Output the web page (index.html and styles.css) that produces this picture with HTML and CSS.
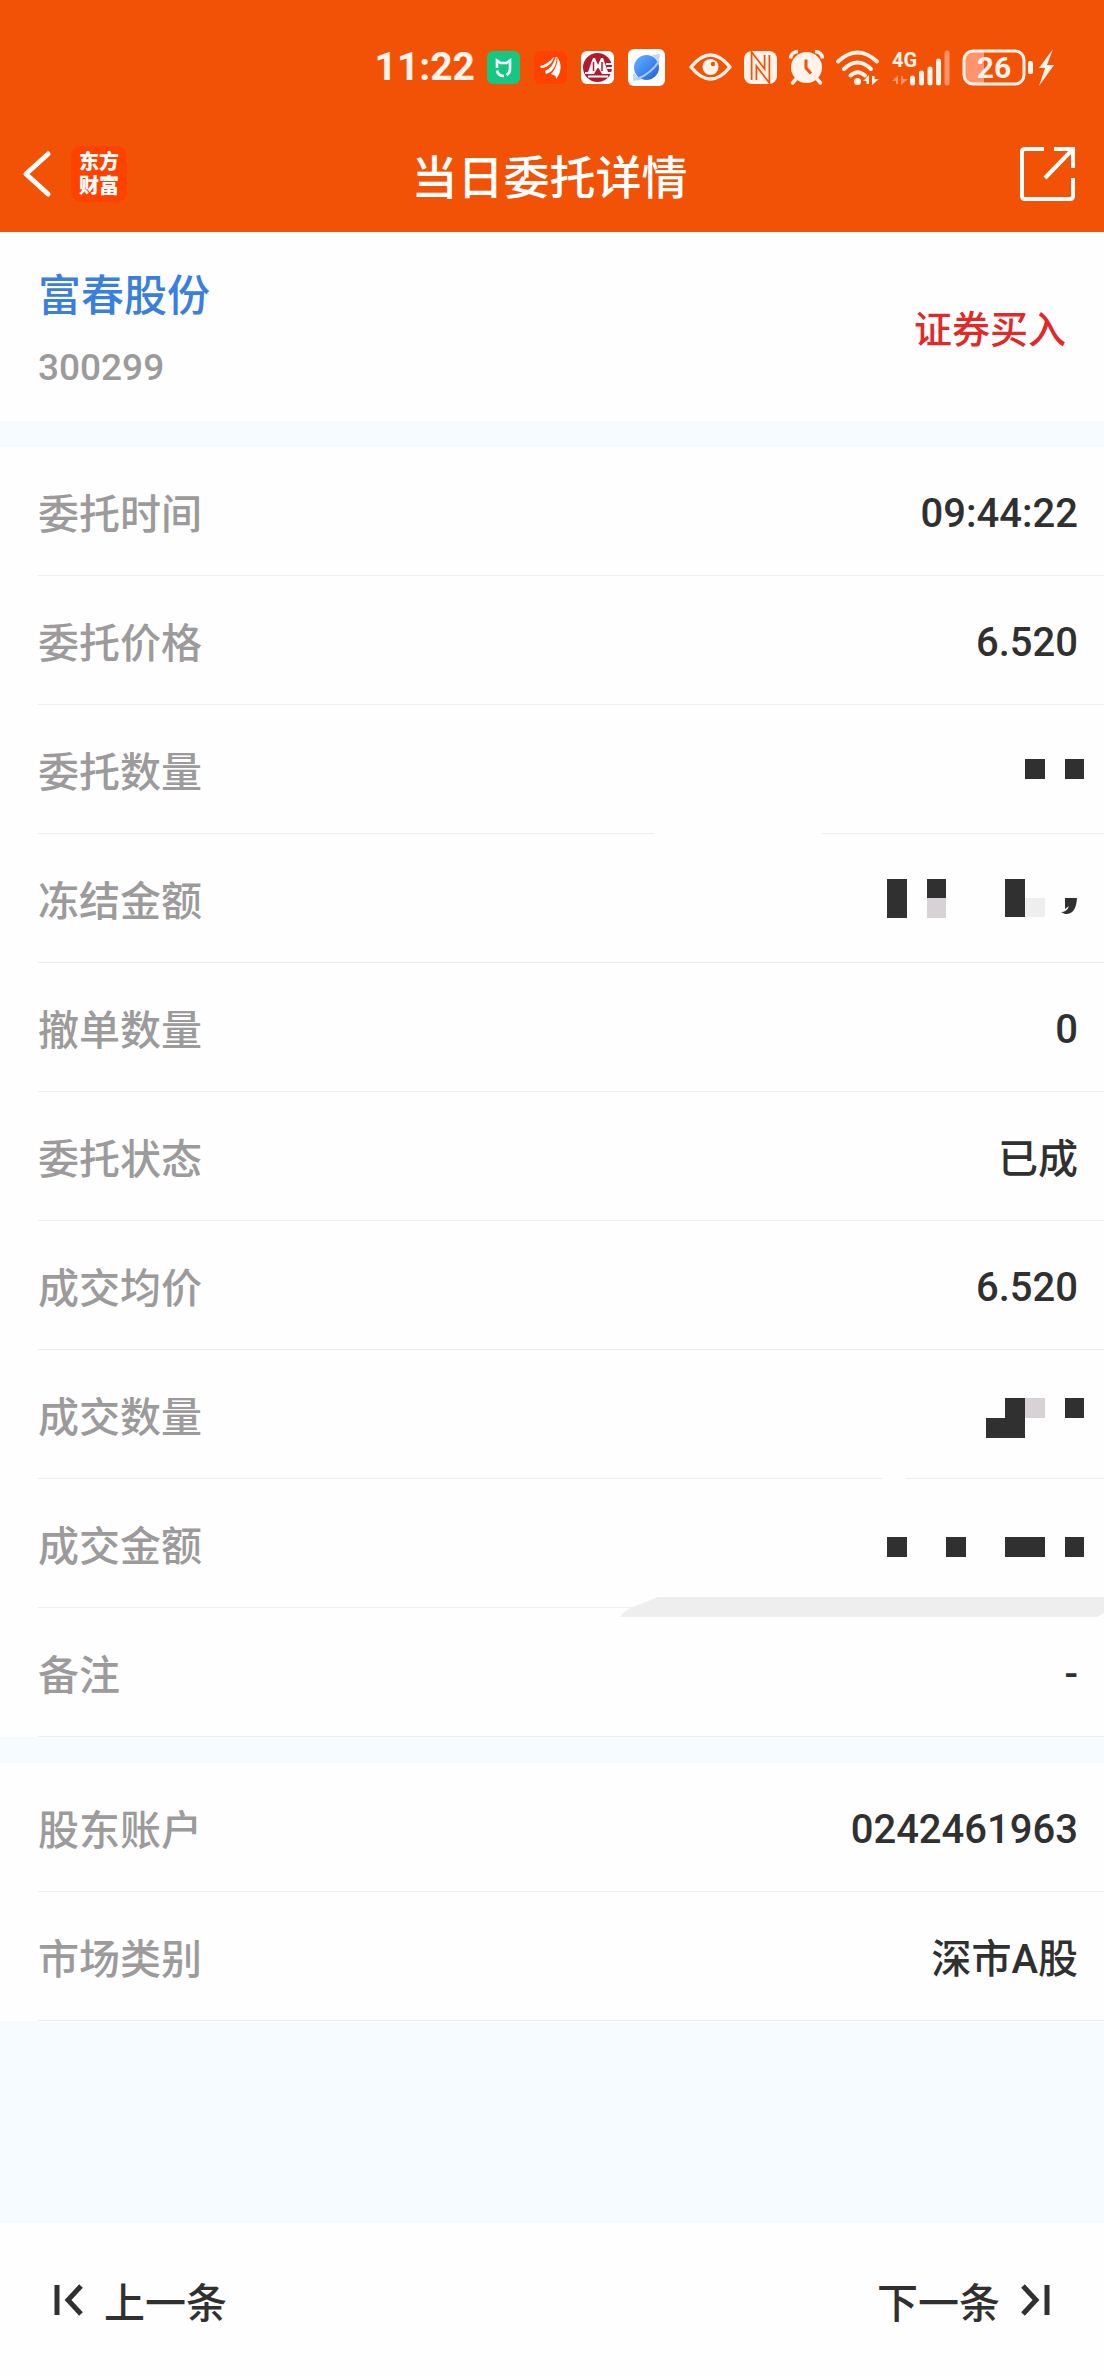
FILE: index.html
```html
<!DOCTYPE html>
<html lang="zh-CN">
<head>
    <meta charset="UTF-8">
    <meta name="viewport" content="width=device-width, initial-scale=1.0">
    <title>当日委托详情</title>
    <link rel="stylesheet" href="styles.css">
</head>
<body>
    <header>
        <div class="status-bar">
            <span class="clock">11:22</span>
            <div class="app-icons">
                <svg width="33" height="33" viewBox="0 0 33 33">
                    <rect width="33" height="33" rx="6" fill="#16c784"/>
                    <path d="M10 17V9.500L13.500 12H19.500L23 9.500V18a6.500 6.500 0 0 1-3.500 6M10 19.500a6.500 6.500 0 0 0 7 5.500" fill="none" stroke="#fff" stroke-width="2.600"/>
                </svg>
                <svg width="33" height="33" viewBox="0 0 33 33">
                    <rect width="33" height="33" rx="6" fill="#ff4200"/>
                    <path d="M6 15c5-1 9-4 14-9-1 6-7 11-13 11zM11 20c5-2 9-7 10-14l2 0c1 8-4 15-11 17zM17 23c4-4 6-9 6-17 5 6 5 15-1 22 0-3-1-4-3-4z" fill="#fff"/>
                    <path d="M9 18.500C15 16 20 12 21 6M15 23c5-4 8-9 8-16" fill="none" stroke="#ff4200" stroke-width="1"/>
                </svg>
                <svg width="33" height="33" viewBox="0 0 33 33">
                    <rect width="33" height="33" rx="6" fill="#fff"/>
                    <circle cx="16.500" cy="16.500" r="14.500" fill="#b4182d"/>
                    <path d="M4 21H7L12 7H14L17 14L20 7H22L27 21H32V23H21L17.500 17H16.500L13 23H4Z" fill="#fff"/>
                    <path d="M11 10L8.500 20H12L15 15ZM23 10" fill="#fff"/>
                    <path d="M12.500 11V20M21 11V20" stroke="#b4182d" stroke-width="1.500"/>
                    <path d="M7 25.500H27M25 13H32M26 17H32" stroke="#fff" stroke-width="1.800"/>
                </svg>
                <svg width="37" height="37" viewBox="0 0 37 37">
                    <defs>
                        <linearGradient id="planet" x1="0" y1="0" x2="1" y2="1">
                            <stop offset="0" stop-color="#64b5ff"/>
                            <stop offset="1" stop-color="#1f5fe0"/>
                        </linearGradient>
                    </defs>
                    <rect width="37" height="37" rx="6" fill="#fff"/>
                    <path d="M24 6L32 5L31 13ZM5 24V32L14 31Z" fill="#c3d8ff"/>
                    <circle cx="18.500" cy="18.500" r="12.500" fill="url(#planet)"/>
                    <path d="M31 12C27 19 18 27 9 30" fill="none" stroke="#a9cbff" stroke-width="2"/>
                </svg>
            </div>
            <div class="system-icons">
                <svg width="43" height="28" viewBox="0 0 43 28">
                    <path d="M2 14Q21.500-10 41 14Q21.500 38 2 14Z" fill="none" stroke="#fff3ec" stroke-width="3.500" stroke-linejoin="round"/>
                    <circle cx="21.500" cy="14" r="8" fill="#fff3ec"/>
                    <circle cx="24" cy="11" r="2.200" fill="#f25205"/>
                </svg>
                <svg width="33" height="33" viewBox="0 0 33 33">
                    <rect width="33" height="33" rx="8" fill="#fff3ec"/>
                    <path d="M10 29V8L23 25V4" fill="none" stroke="#f25205" stroke-width="6.500"/>
                    <path d="M10 29V8L23 25V4" fill="none" stroke="#fff3ec" stroke-width="3"/>
                </svg>
                <svg width="35" height="35" viewBox="0 0 35 35">
                    <circle cx="17.500" cy="17.500" r="15.500" fill="#fff3ec"/>
                    <path d="M1.500 8.500Q2 2 9 1.500M33.500 8.500Q33 2 26 1.500" fill="none" stroke="#fff3ec" stroke-width="3.500"/>
                    <path d="M7 29L3.500 33M28 29L31.500 33" stroke="#fff3ec" stroke-width="3.500" stroke-linecap="round"/>
                    <path d="M17 9.500V18L22 23.500" fill="none" stroke="#f25205" stroke-width="3"/>
                </svg>
                <svg width="44" height="35" viewBox="0 0 44 35">
                    <path d="M2 11.500Q21.500-6.500 41 11.500M8 19Q21.500 6 35 19M14.500 25.500Q21.500 19 29 25.500" fill="none" stroke="#fff3ec" stroke-width="4" stroke-linecap="round"/>
                    <circle cx="21.500" cy="31.500" r="3.500" fill="#fff3ec"/>
                    <path d="M27 31L33 25V34H30.500V31ZM36 26V35L43 29H38.500V26Z" fill="#fff3ec"/>
                </svg>
                <svg width="58" height="35" viewBox="0 0 58 35">
                    <text x="0" y="17" class="network">4G</text>
                    <path d="M0 31L6 25V34H4V31ZM9 26V35L16 29H11V26Z" fill="#ff946c"/>
                    <path d="M20.500 28V33M29.500 23V33M38 19V33M46.500 11V33" stroke="#fff3ec" stroke-width="5" stroke-linecap="round"/>
                    <path d="M55 3V33" stroke="#ff946c" stroke-width="5" stroke-linecap="round"/>
                </svg>
                <svg width="92" height="37" viewBox="0 0 92 37">
                    <path d="M10 3H22V34H10Q3 34 3 27V10Q3 3 10 3Z" fill="#ff946c"/>
                    <rect x="2" y="2" width="60" height="33" rx="9" fill="none" stroke="#fff3ec" stroke-width="3"/>
                    <rect x="66" y="12" width="5" height="13" rx="2" fill="#fff3ec"/>
                    <text x="32" y="29" text-anchor="middle" class="percent">26</text>
                    <path d="M91 0L77 19H83L77 37L92 16H85Z" fill="#fff3ec"/>
                </svg>
            </div>
        </div>
        <div class="title-bar">
            <div class="title-left">
                <button type="button" aria-label="返回">
                    <svg width="28" height="46" viewBox="0 0 28 46">
                        <path d="M25 3L3 23L25 43" fill="none" stroke="#fff" stroke-width="5" stroke-linecap="round" stroke-linejoin="round"/>
                    </svg>
                </button>
                <span class="logo">东方<br>财富</span>
            </div>
            <h1>当日委托详情</h1>
            <button type="button" aria-label="分享">
                <svg width="56" height="56" viewBox="0 0 56 56">
                    <path d="M24 3H5Q2 3 2 6V50Q2 53 5 53H50Q53 53 53 50V32M34 3H53V22M53 3L25 32" fill="none" stroke="#fff" stroke-width="4"/>
                </svg>
            </button>
        </div>
    </header>

    <main>
        <section class="stock">
            <div>
                <h2>富春股份</h2>
                <p class="code">300299</p>
            </div>
            <span class="side">证券买入</span>
        </section>

        <dl class="card">
            <div class="row"><dt>委托时间</dt><dd class="num">09:44:22</dd></div>
            <div class="row"><dt>委托价格</dt><dd class="num">6.520</dd></div>
            <div class="row gap-wide">
                <dt>委托数量</dt>
                <dd>
                    <svg class="mosaic" width="197" height="60" viewBox="0 0 197 60">
                        <path d="M138 20h20v20h-20zM178 20h19v20h-19z"/>
                    </svg>
                </dd>
            </div>
            <div class="row">
                <dt>冻结金额</dt>
                <dd>
                    <svg class="mosaic" width="197" height="60" viewBox="0 0 197 60">
                        <path d="M0 11h20v39H0zM40 11h19v19H40zM118 11h20v38h-20z"/>
                        <path d="M40 30h19v20H40z" fill="#d8d2d6"/>
                        <path d="M138 30h20v19h-20z" fill="#eee"/>
                        <path d="M178 30h12q-1 17-12 16l-4-2q6 0 8-6l-4 3z" shape-rendering="auto"/>
                    </svg>
                </dd>
            </div>
            <div class="row"><dt>撤单数量</dt><dd class="num">0</dd></div>
            <div class="row"><dt>委托状态</dt><dd>已成</dd></div>
            <div class="row"><dt>成交均价</dt><dd class="num">6.520</dd></div>
            <div class="row gap-narrow">
                <dt>成交数量</dt>
                <dd>
                    <svg class="mosaic" width="197" height="60" viewBox="0 0 197 60">
                        <path d="M99 34h19v-20h20v40H99zM178 14h19v20h-19z"/>
                        <path d="M138 14h20v20h-20z" fill="#d8d2d6"/>
                    </svg>
                </dd>
            </div>
            <div class="row">
                <dt>成交金额</dt>
                <dd>
                    <svg class="mosaic" width="197" height="60" viewBox="0 0 197 60">
                        <path d="M0 24h20v20H0zM59 24h20v20H59zM118 24h40v20h-40zM178 24h19v20h-19z"/>
                    </svg>
                    <svg class="smear" width="484" height="20" viewBox="0 0 484 20">
                        <path d="M0 20Q5 13 13 10L38 0H484V16L477 20Z" fill="#eee"/>
                    </svg>
                </dd>
            </div>
            <div class="row"><dt>备注</dt><dd class="num">-</dd></div>
        </dl>

        <dl class="card">
            <div class="row"><dt>股东账户</dt><dd class="num">0242461963</dd></div>
            <div class="row"><dt>市场类别</dt><dd>深市A股</dd></div>
        </dl>
    </main>

    <nav>
        <button type="button">
            <svg width="30" height="32" viewBox="0 0 30 32">
                <path d="M3 1V31M27 2L14 16L27 30" fill="none" stroke="#303030" stroke-width="5"/>
            </svg>
            上一条
        </button>
        <button type="button">
            下一条
            <svg width="30" height="32" viewBox="0 0 30 32">
                <path d="M27 1V31M3 2L16 16L3 30" fill="none" stroke="#303030" stroke-width="5"/>
            </svg>
        </button>
    </nav>
</body>
</html>
```
FILE: styles.css
```css
* {
    box-sizing: border-box;
}

body {
    display: flex;
    flex-direction: column;
    min-height: 100vh;
    margin: 0;
    background-color: #f5fbff;
    color: #303030;
    font-family: Roboto, "Noto Sans CJK SC", sans-serif;
    font-size: 41px;
    font-weight: 500;
}

h1, h2, p, dl, dd {
    margin: 0;
    font-weight: 500;
}

svg {
    display: block;
    flex-shrink: 0;
    overflow: visible;
}

button {
    display: flex;
    align-items: center;
    padding: 0;
    border: none;
    background: none;
    color: inherit;
    font: inherit;
    cursor: pointer;
}

header {
    background-color: #f25205;
    color: #fff;
}

/* status bar */
.status-bar {
    display: flex;
    align-items: center;
    justify-content: flex-end;
    height: 116px;
    padding: 18px 50px 0 0;
}

.clock {
    margin-right: 12px;
    color: #fff3ec;
    font-size: 39px;
    font-weight: 700;
}

.app-icons {
    display: flex;
    align-items: center;
    gap: 14px;
    margin-right: 24px;
}

.system-icons {
    display: flex;
    align-items: center;
    gap: 12px;
}

.network {
    fill: #fff3ec;
    font-size: 20px;
    font-weight: 700;
}

.percent {
    fill: #fff3ec;
    font-size: 30px;
    font-weight: 700;
}

/* title bar */
.title-bar {
    display: grid;
    grid-template-columns: 1fr auto 1fr;
    align-items: center;
    height: 116px;
    padding: 0 28px 0 23px;
}

.title-bar > button {
    justify-self: end;
}

.title-left {
    display: flex;
    align-items: center;
    gap: 20px;
}

.logo {
    padding: 4px 8px;
    border-radius: 10px;
    background-color: #ff4200;
    font-size: 20px;
    font-weight: 900;
    line-height: 24px;
}

h1 {
    font-size: 46px;
}

/* stock summary */
.stock {
    display: flex;
    align-items: center;
    justify-content: space-between;
    height: 189px;
    padding: 0 38px;
    background-color: #fefefe;
}

h2 {
    color: #3a7fdc;
    font-size: 43px;
    line-height: 64px;
}

.code {
    padding-top: 8px;
    color: #9c9a9b;
    font-size: 37px;
    line-height: 64px;
}

.stock > div {
    padding-top: 10px;
}

.side {
    color: #e02a2a;
    font-size: 38px;
}

/* detail rows */
.card {
    margin-top: 26px;
    background-color: #fefefe;
}

.row {
    position: relative;
    display: flex;
    align-items: center;
    justify-content: space-between;
    height: 129px;
    padding: 0 26px 1px 38px;
    background: linear-gradient(#eee, #eee) 38px 100% / 100% 1px no-repeat;
}

.row dt {
    color: #9c9a9b;
}

.row dd {
    font-size: 40px;
}

.row .num {
    padding-top: 4px;
}

.gap-wide::after,
.gap-narrow::after {
    content: "";
    position: absolute;
    bottom: 0;
    right: 282px;
    width: 168px;
    height: 1px;
    background-color: #fefefe;
}

.gap-narrow::after {
    right: 198px;
    width: 24px;
}

.mosaic {
    margin-right: -6px;
    fill: #303030;
    shape-rendering: crispEdges;
}

.smear {
    position: absolute;
    right: 0;
    bottom: -9px;
    z-index: 1;
}

/* previous / next */
nav {
    display: flex;
    justify-content: space-between;
    height: 153px;
    margin-top: auto;
    padding: 0 54px;
    background-color: #fefefe;
}

nav button {
    gap: 20px;
}
```
